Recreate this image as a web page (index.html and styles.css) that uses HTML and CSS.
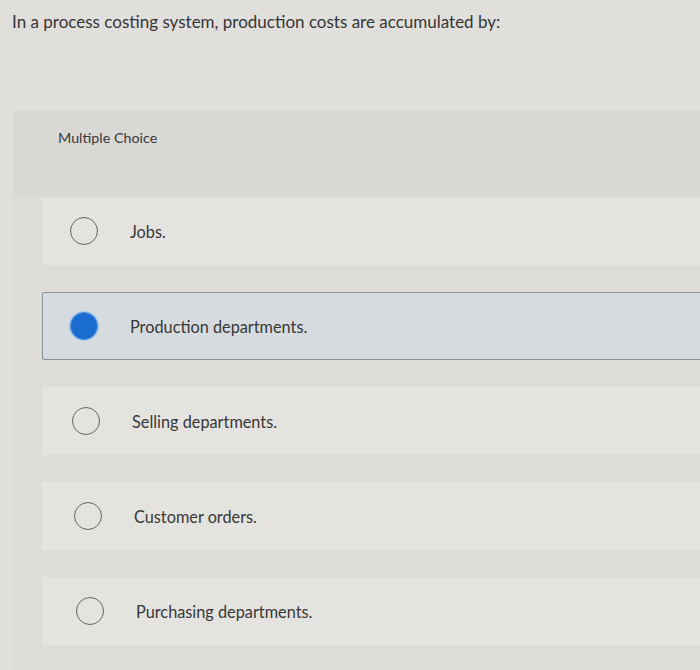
FILE: index.html
```html
<!DOCTYPE html>
<html>
<head>
<meta charset="utf-8">
<link rel="stylesheet" href="styles.css">
</head>
<body>
<div class="question">In a process costing system, production costs are accumulated by:</div>
<div class="panel">
  <div class="label">Multiple Choice</div>
  <div class="options">
    <div class="option"><span class="radio"></span><span class="text">Jobs.</span></div>
    <div class="option selected"><span class="radio"></span><span class="text">Production departments.</span></div>
    <div class="option"><span class="radio"></span><span class="text">Selling departments.</span></div>
    <div class="option"><span class="radio"></span><span class="text">Customer orders.</span></div>
    <div class="option"><span class="radio"></span><span class="text">Purchasing departments.</span></div>
  </div>
</div>
</body>
</html>
```
FILE: styles.css
```css
html, body {
  margin: 0;
  padding: 0;
  background: #e0dfdc;
  font-family: Lato, "Open Sans", "Liberation Sans", sans-serif;
  color: #363636;
}
.question {
  padding: 11px 0 0 12px;
  font-size: 17px;
  line-height: 22px;
  height: 100px;
}
.panel {
  margin-left: 13px;
  background: #d9d8d5;
  height: 559px;
  box-sizing: border-box;
  padding-top: 16px;
  overflow: hidden;
}
.label {
  padding-left: 45px;
  font-size: 14.3px;
  line-height: 22px;
  color: #3a3a3a;
  height: 70px;
}
.options {
  display: flex;
  flex-direction: column;
  gap: 27px;
  padding-left: 29px;
  padding-bottom: 30px;
  margin-right: -10px;
  background: #dddcd8;
}
.option {
  height: 68px;
  box-sizing: border-box;
  display: flex;
  align-items: center;
  padding-left: 27px;
  background: #e4e3df;
  border: 1px solid transparent;
}
.option:nth-child(3) { padding-left: 29px; }
.option:nth-child(4) { padding-left: 31px; }
.option:nth-child(5) { padding-left: 33px; }
.option.selected {
  background: #d6dbdf;
  border: 1px solid #8a9096;
  border-radius: 2px;
}
.radio {
  width: 28px;
  height: 28px;
  box-sizing: border-box;
  border-radius: 50%;
  border: 1.5px solid #666;
  flex: none;
}
.option.selected .radio {
  background: #1a6ccf;
  border: 1px solid #4d8fe0;
  box-shadow: 0 0 0 1px #a9c6ea;
}
.text {
  margin-left: 32px;
  font-size: 16.3px;
  color: #383838;
}
```
